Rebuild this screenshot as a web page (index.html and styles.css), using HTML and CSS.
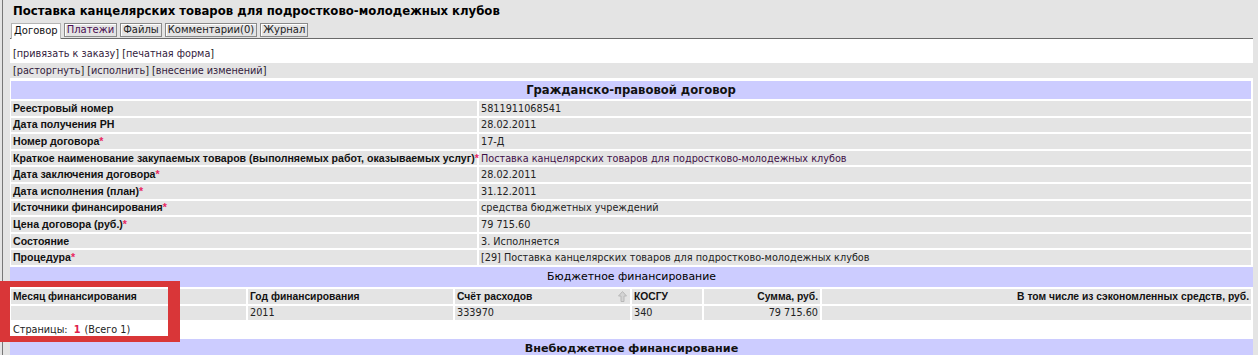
FILE: index.html
```html
<!DOCTYPE html>
<html lang="ru">
<head>
    <meta charset="UTF-8">
    <title>Поставка канцелярских товаров для подростково-молодежных клубов</title>
    <link rel="stylesheet" href="styles.css">
</head>
<body>
    <div class="page">
        <h1 class="title">Поставка канцелярских товаров для подростково-молодежных клубов</h1>

        <div class="tabs">
            <span class="tab active">Договор</span>
            <span class="tab visited">Платежи</span>
            <span class="tab">Файлы</span>
            <span class="tab">Комментарии(0)</span>
            <span class="tab">Журнал</span>
        </div>

        <div class="panel">
            <div class="actions">[<a href="#">привязать к заказу</a>] [<a href="#">печатная форма</a>]</div>
            <div class="actions alt">[<a href="#">расторгнуть</a>] [<a href="#">исполнить</a>] [<a href="#">внесение изменений</a>]</div>

            <table class="form">
                <colgroup>
                    <col class="c-label">
                    <col>
                </colgroup>
                <tr><th colspan="2" class="section">Гражданско-правовой договор</th></tr>
                <tr><td class="label">Реестровый номер</td><td>5811911068541</td></tr>
                <tr><td class="label">Дата получения РН</td><td>28.02.2011</td></tr>
                <tr><td class="label">Номер договора<span class="req">*</span></td><td>17-Д</td></tr>
                <tr><td class="label">Краткое наименование закупаемых товаров (выполняемых работ, оказываемых услуг)<span class="req">*</span></td><td class="link">Поставка канцелярских товаров для подростково-молодежных клубов</td></tr>
                <tr><td class="label">Дата заключения договора<span class="req">*</span></td><td>28.02.2011</td></tr>
                <tr><td class="label">Дата исполнения (план)<span class="req">*</span></td><td>31.12.2011</td></tr>
                <tr><td class="label">Источники финансирования<span class="req">*</span></td><td>средства бюджетных учреждений</td></tr>
                <tr><td class="label">Цена договора (руб.)<span class="req">*</span></td><td>79 715.60</td></tr>
                <tr><td class="label">Состояние</td><td>3. Исполняется</td></tr>
                <tr><td class="label">Процедура<span class="req">*</span></td><td>[29] Поставка канцелярских товаров для подростково-молодежных клубов</td></tr>
            </table>

            <div class="section-title plain">Бюджетное финансирование</div>

            <table class="grid">
                <colgroup>
                    <col class="c-month">
                    <col class="c-year">
                    <col class="c-account">
                    <col class="c-kosgu">
                    <col class="c-sum">
                    <col>
                </colgroup>
                <tr>
                    <th>Месяц финансирования</th>
                    <th>Год финансирования</th>
                    <th class="sorted">Счёт расходов
                        <svg class="sort-icon" width="9" height="11" viewBox="0 0 9 11">
                            <path d="M4.5 0.5 L8.5 5 H6 V10.5 H3 V5 H0.5 Z" fill="#d4d4d4" stroke="#b8b8b8" stroke-width="1"/>
                        </svg>
                    </th>
                    <th>КОСГУ</th>
                    <th class="num">Сумма, руб.</th>
                    <th class="num">В том числе из сэкономленных средств, руб.</th>
                </tr>
                <tr>
                    <td></td>
                    <td>2011</td>
                    <td>333970</td>
                    <td>340</td>
                    <td class="num">79 715.60</td>
                    <td></td>
                </tr>
            </table>

            <div class="pager">Страницы: <b>1</b> (Всего 1)</div>

            <div class="section-title">Внебюджетное финансирование</div>
        </div>
    </div>

    <div class="highlight"></div>
</body>
</html>
```

FILE: styles.css
```css
* {
    box-sizing: border-box;
}

html, body {
    margin: 0;
    padding: 0;
    height: 100%;
    overflow: hidden;
}

body {
    font-family: 'DejaVu Sans', Verdana, sans-serif;
    font-size: 9.7px;
    color: #222;
    background: #e4e4e4;
}

.page {
    margin-left: 2px;
    border-left: 1px solid #777;
    padding: 0 5px 0 7px;
    min-height: 100%;
}

.title {
    margin: 0;
    padding: 1px 3px 0;
    height: 23px;
    line-height: 20px;
    font-family: 'DejaVu Sans', Verdana, sans-serif;
    font-size: 11.7px;
    font-weight: bold;
    color: #000;
}

/* tabs */
.tabs {
    display: flex;
    align-items: flex-end;
    gap: 3px;
    height: 16px;
    padding-left: 1px;
    border-bottom: 1px solid #6a6a6a;
}

.tab {
    height: 14px;
    line-height: 12px;
    padding: 0 2px;
    margin-bottom: 1px;
    border: 1px solid #8a8a8a;
    box-shadow: inset 1px 1px 0 #fff;
    background: #e4e4e4;
    color: #222;
    font-size: 10px;
}

.tab.visited {
    color: #4b0f52;
}

.tab.active {
    height: 16px;
    margin-bottom: -1px;
    border-color: #b5b5b5;
    border-bottom: none;
    box-shadow: none;
    background: #fff;
    padding-top: 1px;
    color: #111;
}

/* content */
.panel {
    background: #fff;
}

.actions {
    padding: 8px 3px 3px;
    height: 24px;
    line-height: 13px;
}

.actions.alt {
    background: #e4e4e4;
    padding: 1px 3px;
    height: 15px;
}

.actions a {
    color: #33213d;
    text-decoration: none;
}

.form,
.grid {
    width: calc(100% + 1px);
    margin-left: -1px;
    table-layout: fixed;
    border-collapse: separate;
    border-spacing: 2px;
    margin-top: 1px;
}

.form td,
.grid td,
.grid th {
    background: #e4e4e4;
    height: 14.6px;
    padding: 0 2px;
    line-height: 13px;
    text-align: left;
    vertical-align: middle;
    white-space: nowrap;
}

.form .section {
    background: #ccccff;
    height: 18px;
    padding: 0;
    font-size: 11.6px;
    font-weight: bold;
    color: #111;
    text-align: center;
}

.c-label { width: 466px; }

.form .label {
    font-family: 'Liberation Sans', Arial, sans-serif;
    font-size: 10.6px;
    font-weight: bold;
    color: #111;
    overflow: visible;
}

.form .link {
    color: #3f0f47;
}

.req {
    color: #e8265f;
    font-weight: bold;
}

.section-title {
    background: #ccccff;
    height: 20px;
    line-height: 20px;
    font-size: 11.2px;
    font-weight: bold;
    color: #111;
    text-align: center;
}

.section-title.plain {
    font-size: 10.9px;
    font-weight: normal;
    color: #000;
}

.grid {
    margin-top: 0;
}

.grid th {
    font-family: 'Liberation Sans', Arial, sans-serif;
    font-size: 10.3px;
    font-weight: bold;
    color: #111;
}

.grid .num {
    text-align: right;
}

.grid .sorted {
    position: relative;
}

.sort-icon {
    position: absolute;
    right: 3px;
    top: 2px;
}

.c-month { width: 235px; }
.c-year { width: 205px; }
.c-account { width: 175px; }
.c-kosgu { width: 70px; }
.c-sum { width: 116px; }

.pager {
    padding: 1px 3px;
    height: 17px;
    line-height: 14px;
    color: #222;
}

.pager b {
    color: #e0204a;
    padding: 0 1px 0 3px;
}

/* annotation frame over the screenshot */
.highlight {
    position: absolute;
    left: 0;
    top: 281px;
    width: 180px;
    height: 61px;
    border-style: solid;
    border-color: #d93638;
    border-width: 6px 12px 6px 10px;
}
```
